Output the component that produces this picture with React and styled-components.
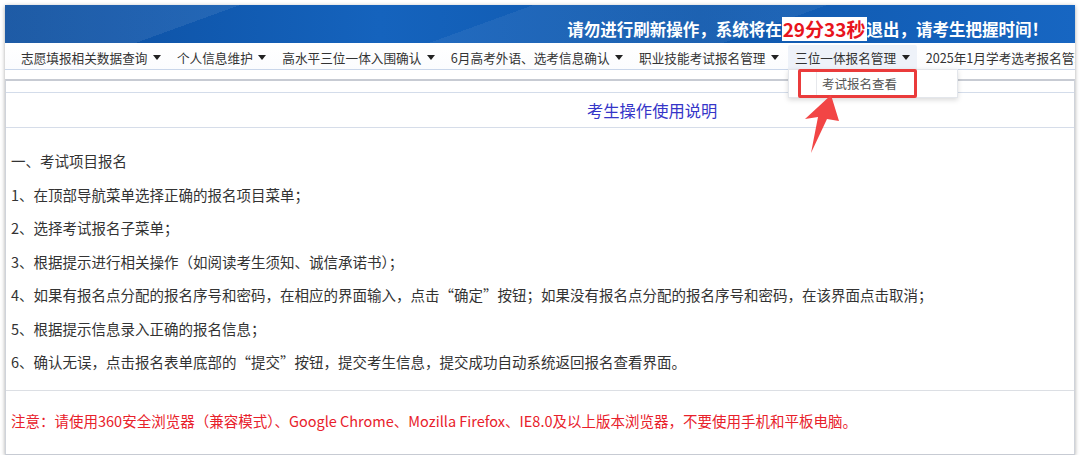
import React from 'react';
import styled, { createGlobalStyle } from 'styled-components';

const GlobalStyle = createGlobalStyle`
  html, body {
    margin: 0;
    padding: 0;
    background: #ffffff;
  }
  body {
    font-family: "Noto Sans CJK SC", "Noto Sans", sans-serif;
    color: #333;
  }
`;

const Frame = styled.div`
  position: relative;
  width: 1070px;
  margin: 5px 5px 0;
  background: #fff;
  box-shadow: 0 1px 4px rgba(0, 0, 0, 0.35);
  overflow: hidden;
`;

const Header = styled.header`
  height: 38px;
  box-sizing: border-box;
  display: flex;
  justify-content: flex-end;
  align-items: center;
  padding: 9px 27px 0 0;
  background:
    linear-gradient(160deg, rgba(255,255,255,0.08) 0 20%, rgba(255,255,255,0) 20% 45%, rgba(255,255,255,0.06) 45% 70%, rgba(255,255,255,0) 70%),
    linear-gradient(90deg, #0b4d9e 0%, #1563bd 35%, #0f58ad 65%, #1766c2 100%);
  color: #fff;
  font-size: 16.5px;
  font-weight: 700;
  line-height: 24px;
  white-space: nowrap;
`;

const Countdown = styled.span`
  background: #fff;
  color: #e8141c;
  font-size: 19px;
  font-weight: 700;
  padding: 0 1px;
  line-height: 24px;
`;

const Nav = styled.nav`
  height: 27px;
  box-sizing: border-box;
  display: flex;
  align-items: flex-end;
  padding-left: 9px;
  border-bottom: 1px solid #c9d6ea;
  background: linear-gradient(#ffffff, #fbfcfe);
  white-space: nowrap;
`;

const NavItem = styled.div`
  position: relative;
  display: flex;
  align-items: center;
  height: 24px;
  padding: 0 7px;
  margin-right: 2px;
  font-size: 12.65px;
  color: #333;
  background: ${(p) => (p.$active ? '#eef2f9' : 'transparent')};
  border-radius: 2px 2px 0 0;
  flex-shrink: 0;
`;

const Caret = styled.span`
  display: inline-block;
  margin-left: 5.5px;
  width: 0;
  height: 0;
  border-left: 4px solid transparent;
  border-right: 4px solid transparent;
  border-top: 5px solid #222;
`;

const Dropdown = styled.div`
  position: absolute;
  left: 0;
  top: 24px;
  width: 170px;
  height: 29px;
  box-sizing: border-box;
  background: #fff;
  border: 1px solid #e3e6eb;
  box-shadow: 0 2px 5px rgba(0, 0, 0, 0.15);
  display: flex;
  align-items: center;
  z-index: 5;
`;

const DropIcon = styled.span`
  width: 27px;
  height: 100%;
  border-right: 1px solid #e6e8ec;
`;

const DropText = styled.span`
  padding-left: 5px;
  font-size: 12.5px;
  color: #555;
`;

const Highlight = styled.span`
  position: absolute;
  left: 9px;
  top: -1px;
  width: 119px;
  height: 29px;
  box-sizing: border-box;
  border: 3px solid #ea3b3b;
  border-radius: 2px;
`;

const Arrow = styled.svg`
  position: absolute;
  left: 790px;
  top: 85px;
  z-index: 6;
`;

const Panel = styled.section`
  margin-top: 9px;
  border-top: 2px solid #c7cbd3;
  border-left: 1px solid #cfd3da;
  border-right: 1px solid #cfd3da;
  border-bottom: 1px solid #c7cbd3;
`;

const Strip = styled.div`
  height: 11px;
  border-bottom: 1px solid #d3dcea;
`;

const Title = styled.div`
  height: 34px;
  line-height: 34px;
  padding-left: 581px;
  border-bottom: 1px solid #d6dde9;
  color: #3535c8;
  font-size: 16.3px;
`;

const Content = styled.div`
  padding: 16px 0 11px 5px;
  border-bottom: 1px solid #dcdfe4;
`;

const Line = styled.p`
  margin: 0;
  line-height: 33.5px;
  font-size: 14.5px;
  color: #333;
  white-space: nowrap;
`;

const Note = styled.div`
  padding: 20px 0 23px 5px;
  line-height: 20px;
  font-size: 14.5px;
  color: #e8212b;
  white-space: nowrap;
`;

const navItems = [
  '志愿填报相关数据查询',
  '个人信息维护',
  '高水平三位一体入围确认',
  '6月高考外语、选考信息确认',
  '职业技能考试报名管理',
  '三位一体报名管理',
  '2025年1月学考选考报名管理',
];

const lines = [
  '一、考试项目报名',
  '1、在顶部导航菜单选择正确的报名项目菜单；',
  '2、选择考试报名子菜单；',
  '3、根据提示进行相关操作（如阅读考生须知、诚信承诺书）；',
  '4、如果有报名点分配的报名序号和密码，在相应的界面输入，点击“确定”按钮；如果没有报名点分配的报名序号和密码，在该界面点击取消；',
  '5、根据提示信息录入正确的报名信息；',
  '6、确认无误，点击报名表单底部的“提交”按钮，提交考生信息，提交成功自动系统返回报名查看界面。',
];

export default function App() {
  return (
    <>
      <GlobalStyle />
      <Frame>
        <Header>
          请勿进行刷新操作，系统将在<Countdown>29分33秒</Countdown>退出，请考生把握时间！
        </Header>
        <Nav>
          {navItems.map((item, i) => (
            <NavItem key={item} $active={i === 5}>
              {item}
              <Caret />
              {i === 5 && (
                <Dropdown>
                  <DropIcon />
                  <DropText>考试报名查看</DropText>
                  <Highlight />
                </Dropdown>
              )}
            </NavItem>
          ))}
        </Nav>
        <Panel>
          <Strip />
          <Title>考生操作使用说明</Title>
          <Content>
            {lines.map((l) => (
              <Line key={l}>{l}</Line>
            ))}
          </Content>
          <Note>
            注意：请使用360安全浏览器（兼容模式）、Google Chrome、Mozilla Firefox、IE8.0及以上版本浏览器，不要使用手机和平板电脑。
          </Note>
        </Panel>
        <Arrow width="50" height="70" viewBox="0 0 50 70">
          <polygon points="36,5 44,31 32,29 16,63 23,27 10,29" fill="#f24545" />
        </Arrow>
      </Frame>
    </>
  );
}
